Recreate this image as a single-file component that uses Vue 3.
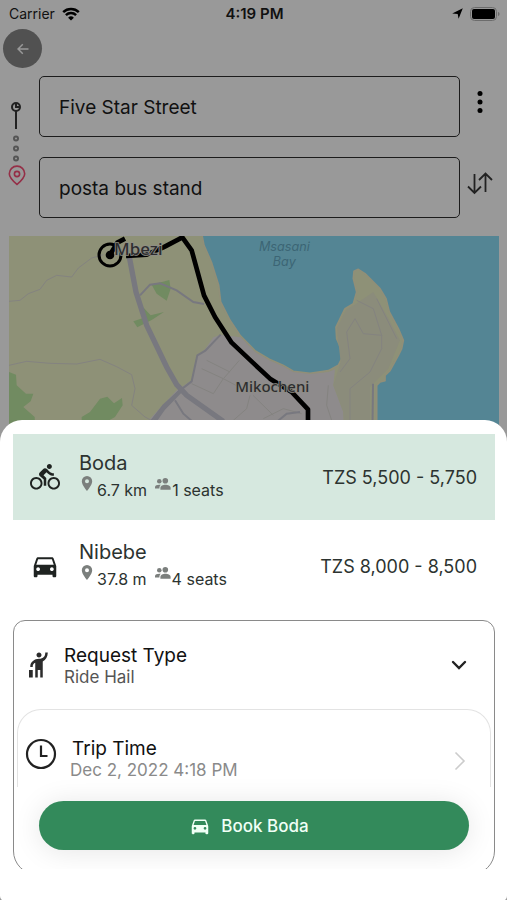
<script setup>
import { ref } from 'vue'

const pickup = ref('Five Star Street')
const destination = ref('posta bus stand')
const selected = ref('Boda')

const rides = [
  { name: 'Boda', icon: 'bike', distance: '6.7 km', seats: 1, price: 'TZS 5,500 - 5,750' },
  { name: 'Nibebe', icon: 'car', distance: '37.8 m', seats: 4, price: 'TZS 8,000 - 8,500' }
]

const icons = {
  bike: 'M15.5 5.5c1.1 0 2-.9 2-2s-.9-2-2-2-2 .9-2 2 .9 2 2 2zM5 12c-2.8 0-5 2.2-5 5s2.2 5 5 5 5-2.2 5-5-2.2-5-5-5zm0 8.5c-1.9 0-3.5-1.6-3.5-3.5s1.6-3.5 3.5-3.5 3.5 1.6 3.5 3.5-1.6 3.5-3.5 3.5zm5.8-10l2.4-2.4.8.8c1.3 1.3 3 2.1 5.1 2.1V9c-1.5 0-2.7-.6-3.6-1.5l-1.9-1.9c-.5-.4-1-.6-1.6-.6s-1.1.2-1.4.6L7.8 8.4c-.4.4-.6.9-.6 1.4 0 .6.2 1.1.6 1.4L11 14v5h2v-6.2l-2.2-2.3zM19 12c-2.8 0-5 2.2-5 5s2.2 5 5 5 5-2.2 5-5-2.2-5-5-5zm0 8.5c-1.9 0-3.5-1.6-3.5-3.5s1.6-3.5 3.5-3.5 3.5 1.6 3.5 3.5-1.6 3.5-3.5 3.5z',
  car: 'M18.92 6.01C18.72 5.42 18.16 5 17.5 5h-11c-.66 0-1.21.42-1.42 1.01L3 12v8c0 .55.45 1 1 1h1c.55 0 1-.45 1-1v-1h12v1c0 .55.45 1 1 1h1c.55 0 1-.45 1-1v-8l-2.08-5.99zM6.5 16c-.83 0-1.5-.67-1.5-1.5S5.67 13 6.5 13s1.5.67 1.5 1.5S7.33 16 6.5 16zm11 0c-.83 0-1.5-.67-1.5-1.5s.67-1.5 1.5-1.5 1.5.67 1.5 1.5-.67 1.5-1.5 1.5zM5 11l1.5-4.5h11L19 11H5z'
}

const swapStops = () => {
  const from = pickup.value
  pickup.value = destination.value
  destination.value = from
}
</script>

<template>
  <div class="screen">
    <header class="status-bar">
      <div class="status-bar__left">
        <span>Carrier</span>
        <svg class="wifi" viewBox="0 0 18 14">
          <path d="M1.2 5.2a11.4 11.4 0 0 1 15.6 0" />
          <path d="M3.9 8.1a7.4 7.4 0 0 1 10.2 0" />
          <path class="solid" d="M9 13.6L6.1 10.7a4.2 4.2 0 0 1 5.8 0z" />
        </svg>
      </div>
      <span class="status-bar__time">4:19 PM</span>
      <div class="status-bar__right">
        <svg class="arrow" viewBox="0 0 11 11">
          <path d="M10.8.2L6.6 10.8 5.7 5.9.2 5.6z" />
        </svg>
        <svg class="battery" viewBox="0 0 30 14">
          <rect class="battery__shell" x="0.5" y="0.5" width="26" height="13" rx="4" />
          <rect x="2" y="2" width="23" height="10" rx="2" />
          <path class="battery__tip" d="M28 5c2 .6 2 3.4 0 4z" />
        </svg>
      </div>
    </header>

    <button class="back" type="button" aria-label="Back">
      <svg viewBox="0 0 12 12"><path d="M11.5 6H1M5.8 1.2L1 6l4.8 4.8" /></svg>
    </button>

    <div class="stops">
      <svg class="stops__trail" viewBox="0 0 20 90">
        <g stroke="#222">
          <circle cx="10" cy="8" r="4" />
          <path d="M10 4v4h3M10 12v18" />
        </g>
        <circle cx="10" cy="39.5" r="2" />
        <circle cx="10" cy="49.5" r="2" />
        <circle cx="10" cy="59.5" r="2" />
        <g stroke="#952f47" stroke-width="1.6">
          <path d="M11 85.5c-3-2.6-7.7-6.5-7.7-10.7a7.7 7.7 0 0 1 15.4 0c0 4.2-4.7 8.1-7.7 10.7z" />
          <circle cx="11" cy="75" r="2.6" />
        </g>
      </svg>
      <input v-model="pickup" class="stops__field" type="text" aria-label="Pickup" />
      <button class="stops__action" type="button" aria-label="More options">
        <svg viewBox="0 0 28 28">
          <circle cx="14" cy="5.5" r="2.5" />
          <circle cx="14" cy="14" r="2.5" />
          <circle cx="14" cy="22.5" r="2.5" />
        </svg>
      </button>
      <input v-model="destination" class="stops__field" type="text" aria-label="Destination" />
      <button class="stops__action" type="button" aria-label="Swap stops" @click="swapStops">
        <svg class="swap" viewBox="0 0 28 28">
          <path d="M8.5 5v19M2 17.5L8.5 24l6.5-6.5M19.5 23V4.5M13 11l6.5-6.5L26 11" />
        </svg>
      </button>
    </div>

    <svg class="map" viewBox="27 32 1470 612" preserveAspectRatio="xMidYMin slice">
      <rect x="27" y="32" width="1470" height="612" fill="#548594" />
      <path class="coast" fill="#8e9177" d="M0 0H600L612 60 634 110 656 180 662 230 690 285 720 330 765 376 808 402 849 420 880 438 930 444 985 436 1015 420 1025 400 1023 370 1010 340 1008 305 1035 250 1060 235 1070 200 1060 160 1062 138 1075 132 1095 145 1140 190 1158 220 1168 260 1195 310 1210 345 1205 370 1195 390 1170 436 1155 450 1155 466 1140 470 1130 480 1130 585 1134 650H0z" />
      <path fill="#8e8b8c" d="M662 328L722 336 765 380 808 405 849 423 880 440 930 446 985 440 1005 432 1000 480 1030 560 1034 650H400L450 580 530 495 575 465 592 390 615 372 640 336z" />
      <path fill="#8b8c7b" d="M1022 410L1014 340 1012 306 1038 254 1064 238 1120 200 1160 270 1200 345 1165 430 1110 485 1110 650H1034L1030 560 1000 480z" />
      <g fill="#718b61">
        <path d="M27 440L48 448 50 480 78 505 100 505 92 528 70 545 104 575 108 644H27z" />
        <path d="M245 575L270 560 300 520 322 514 342 534 366 518 368 540 345 575 300 600H245z" />
        <path d="M455 178L508 164 512 190 500 226 470 205z" />
        <path d="M400 288L430 278 428 244 452 270 492 260 455 284 412 306z" />
      </g>
      <g class="lane">
        <path d="M27 228L60 225 85 205 120 192 140 165 170 150 215 155 235 128 275 98 310 88" />
        <path d="M27 420L80 408 150 414 230 416 300 402 350 424 395 448 405 490 395 540 435 575 460 588" />
        <path d="M1070 225L1120 250 1145 330 1090 325 1065 280 1040 320 1050 400 1020 440M1145 330L1145 370 1110 440 1050 490 1050 600M1130 220L1165 290 1190 340" />
        <path d="M985 480L980 540 1000 600M605 430L670 460 745 500M670 460L640 505 575 475M718 405L672 458M620 405L690 440M750 510L740 550 700 585M790 580L850 550 905 565M759 510L820 570" />
      </g>
      <g class="road">
        <path d="M420 210L450 178 480 174 530 195 580 230 612 236" />
        <path d="M455 585L490 540 540 495 575 468 592 390 616 376 662 328" />
        <path class="road--wide" d="M455 600L490 550 540 498" />
        <path d="M525 525L550 565 590 600M830 590L860 565 900 560M1119 475L1117 640" />
        <path class="road--main" d="M388 95L408 200 440 300 500 425 530 478 560 510 670 588" />
      </g>
      <path class="route" d="M330 88L352 52 375 40M378 92L440 88 490 66 547 36 575 75 612 210 645 275 695 352 765 418 810 460 875 500 924 552V650" />
      <circle class="origin" cx="330" cy="89" r="33" />
      <circle cx="330" cy="89" r="13" />
      <g class="map__labels">
        <text x="415" y="88" font-size="51">Mbezi</text>
        <text x="817" y="501" font-size="45">Mikocheni</text>
      </g>
      <g class="map__water">
        <text x="853" y="76" font-size="38">Msasani</text>
        <text x="853" y="121" font-size="38">Bay</text>
      </g>
    </svg>

    <main class="sheet">
      <div class="rides">
        <button
          v-for="ride in rides"
          :key="ride.name"
          type="button"
          :class="['ride', { 'ride--selected': ride.name === selected }]"
          :aria-pressed="ride.name === selected"
          @click="selected = ride.name"
        >
          <svg class="ride__icon" viewBox="0 0 24 24"><path :d="icons[ride.icon]" /></svg>
          <span class="ride__body">
            <span class="ride__name">{{ ride.name }}</span>
            <span class="ride__meta">
              <svg class="pin" viewBox="0 0 12 16">
                <path d="M6 0a5.2 5.2 0 0 0-5.2 5.2C.8 9.1 6 15 6 15s5.2-5.9 5.2-9.8A5.2 5.2 0 0 0 6 0zm0 7.2a2 2 0 1 1 0-4 2 2 0 0 1 0 4z" />
              </svg>
              <span class="ride__distance">{{ ride.distance }}</span>
              <svg class="people" viewBox="0 0 16 12">
                <circle cx="10.3" cy="2.8" r="2.8" />
                <path d="M5.4 11.8V10C5.4 7.6 8 6.7 10.4 6.7s5.2.9 5.2 3.3v1.8z" />
                <circle cx="4.3" cy="3.2" r="2.3" />
                <path d="M0 10.4V9.2C0 7.2 2.8 6.5 5.8 6.8 4.8 7.7 4.4 8.7 4.4 10.4z" />
              </svg>
              <span>{{ ride.seats }} seats</span>
            </span>
          </span>
          <span class="ride__price">{{ ride.price }}</span>
        </button>
      </div>

      <div class="options-clip">
        <div class="options">
          <button class="option" type="button" aria-expanded="false">
            <svg class="option__hail" viewBox="0 0 24 24">
              <path d="M12 6c-1.1 0-2-.9-2-2s.9-2 2-2 2 .9 2 2-.9 2-2 2zM17 2h2v.4c0 2.8-1.6 5.5-4 6.7V22h-2v-6h-2v6H9V10.1c-.3.1-.5.2-.6.3-.9.6-1.4 1.5-1.4 2.6v.5H5V13c0-1.8.8-3.2 2.2-4.3C8.5 7.6 10.2 7 12 7c3.5 0 5-2.2 5-4.6V2zM4 16h3v6H4z" />
            </svg>
            <span class="option__body">
              <span class="option__title">Request Type</span>
              <span class="option__value">Ride Hail</span>
            </span>
            <svg class="option__down" viewBox="0 0 16 10"><path d="M2 2l6 6 6-6" /></svg>
          </button>

          <button class="option option--time" type="button">
            <svg class="option__clock" viewBox="0 0 32 32">
              <circle cx="16" cy="16" r="14" />
              <path d="M16 7.5V18h6.5" />
            </svg>
            <span class="option__body">
              <span class="option__title">Trip Time</span>
              <span class="option__value">Dec 2, 2022 4:18 PM</span>
            </span>
            <svg class="option__next" viewBox="0 0 12 20"><path d="M1.5 1.5L10 10l-8.5 8.5" /></svg>
          </button>

          <button class="book" type="button">
            <svg viewBox="0 0 24 24"><path :d="icons.car" /></svg>
            <span>Book {{ selected }}</span>
          </button>
        </div>
      </div>
    </main>
  </div>
</template>

<style>
body {
  margin: 0;
  background: #999;
}
</style>

<style scoped>
.screen {
  display: flex;
  flex-direction: column;
  min-height: 100vh;
  background: #999;
  color: #111;
  font-family: Inter, 'Liberation Sans', sans-serif;
}

button,
input {
  box-sizing: border-box;
  margin: 0;
  padding: 0;
  border: 0;
  background: none;
  color: inherit;
  font: inherit;
  text-align: left;
}

button {
  cursor: pointer;
}

svg {
  display: block;
  flex: none;
}

/* Status bar */
.status-bar {
  display: grid;
  grid-template-columns: 1fr auto 1fr;
  align-items: center;
  height: 27px;
  padding: 0 7px 0 9px;
  font-size: 14px;
}

.status-bar__left,
.status-bar__right {
  display: flex;
  align-items: center;
  gap: 7px;
}

.status-bar__right {
  justify-content: flex-end;
}

.status-bar__time {
  font-size: 15px;
  font-weight: 600;
}

.wifi {
  width: 18px;
  height: 14px;
  fill: none;
  stroke: #000;
  stroke-width: 2.5;
}

.wifi .solid {
  fill: #000;
  stroke: none;
}

.arrow {
  width: 11px;
  height: 11px;
}

.battery {
  width: 30px;
  height: 14px;
}

.battery__shell {
  fill: none;
  stroke: #6c6c6c;
}

.battery__tip {
  fill: #6c6c6c;
}

.back {
  display: flex;
  align-items: center;
  justify-content: center;
  width: 39px;
  height: 39px;
  margin: 2px 0 8px 3px;
  border-radius: 50%;
  background: #515151;
}

.back svg {
  width: 12px;
  height: 12px;
  fill: none;
  stroke: #999;
  stroke-width: 1.5;
}

/* Pickup and destination */
.stops {
  display: grid;
  grid-template-columns: 39px 1fr 40px;
  gap: 20px 0;
  padding-right: 7px;
}

.stops__trail {
  grid-row: 1 / 3;
  width: 20px;
  height: 90px;
  margin: 23px 0 0 6px;
  fill: none;
  stroke: #555;
  stroke-width: 2;
}

.stops__field {
  width: 100%;
  height: 61px;
  padding: 2px 19px 0;
  border: 1px solid #1c1c1c;
  border-radius: 5px;
  font-size: 19px;
}

.stops__action {
  display: flex;
  align-items: center;
  justify-content: center;
}

.stops__action svg {
  width: 28px;
  height: 28px;
  margin-bottom: 9px;
}

.stops__action .swap {
  fill: none;
  stroke: #222;
  stroke-width: 1.8;
}

/* Map */
.map {
  width: calc(100% - 17px);
  height: 204px;
  margin: 18px 8px 0 9px;
}

.coast {
  stroke: #918f78;
  stroke-width: 5;
  stroke-linejoin: round;
}

.lane {
  fill: none;
  stroke: #848380;
  stroke-width: 3;
}

.road {
  fill: none;
  stroke: #78787f;
  stroke-width: 6;
}

.road--wide {
  stroke-width: 12;
}

.road--main {
  stroke-width: 16;
}

.route {
  fill: none;
  stroke: #000;
  stroke-width: 14;
  stroke-linejoin: round;
}

.origin {
  fill: none;
  stroke: #000;
  stroke-width: 9;
}

.map__labels text,
.map__water text {
  text-anchor: middle;
}

.map__labels text {
  fill: #2d2d2f;
  stroke: #8e8d86;
  stroke-width: 5;
  paint-order: stroke;
  font-family: 'Noto Sans', sans-serif;
  font-weight: 500;
}

.map__water text {
  fill: #3c6575;
  font-style: italic;
}

/* Bottom sheet */
.sheet {
  position: relative;
  flex: 1;
  margin-top: -20px;
  padding: 14px 12px 32px 13px;
  border-radius: 22px 22px 5px 5px;
  background: #fff;
}

.rides {
  display: grid;
  gap: 3px;
}

.ride {
  display: flex;
  align-items: center;
  width: 100%;
  height: 86px;
  padding: 0 18px 0 17px;
  color: #2c3330;
}

.ride--selected {
  background: #d6e8df;
}

.ride__icon {
  width: 30px;
  height: 30px;
  margin-right: 19px;
  fill: #1f2321;
}

.ride__body {
  display: flex;
  flex: 1;
  flex-direction: column;
}

.ride__name {
  font-size: 20px;
  line-height: 26px;
}

.ride__meta {
  display: flex;
  align-items: flex-start;
  font-size: 16px;
  line-height: 28px;
}

.pin {
  width: 12px;
  height: 16px;
  margin-right: 4px;
  margin-left: 2px;
  fill: #7b7f7d;
}

.ride__distance {
  margin-right: 8px;
}

.people {
  width: 16px;
  height: 12px;
  margin: 2px 1px 0 0;
  fill: #7b7f7d;
}

.ride__price {
  font-size: 18px;
}

/* Request options */
.options-clip {
  overflow: hidden;
  margin-top: 11px;
}

.options {
  margin-bottom: -6px;
  padding: 0 3px 24px;
  border: 1px solid #8a8a8a;
  border-radius: 12px 12px 24px 24px;
}

.option {
  display: flex;
  align-items: center;
  width: 100%;
  height: 88px;
  padding: 0 24px 0 7px;
}

.option__hail {
  width: 30px;
  height: 30px;
  margin-right: 10px;
  fill: #2b2b2b;
}

.option__body {
  display: flex;
  flex: 1;
  flex-direction: column;
}

.option__title {
  font-size: 19px;
  line-height: 24px;
}

.option__value {
  color: #555;
  font-size: 17px;
  line-height: 18px;
}

.option__down {
  width: 16px;
  height: 10px;
  fill: none;
  stroke: #222;
  stroke-width: 2.4;
  stroke-linecap: round;
}

.option--time {
  align-items: flex-end;
  height: 78px;
  padding: 0 24px 8px 7px;
  border: 1px solid #e3e3e3;
  border-bottom: 0;
  border-radius: 24px 24px 0 0;
}

.option--time .option__title {
  padding-left: 2px;
}

.option--time .option__value {
  color: #8a8a8a;
}

.option__clock {
  width: 32px;
  height: 32px;
  margin: 0 13px 9px 0;
  fill: none;
  stroke: #222;
  stroke-width: 2.2;
}

.option__next {
  width: 12px;
  height: 20px;
  margin-bottom: 8px;
  fill: none;
  stroke: #ccc;
  stroke-width: 1.6;
}

.book {
  display: flex;
  align-items: center;
  justify-content: center;
  gap: 10px;
  width: calc(100% - 44px);
  height: 49px;
  margin: 14px 22px 0;
  padding-right: 10px;
  border-radius: 25px;
  background: #338a5b;
  box-shadow: 0 2px 28px rgba(0, 0, 0, 0.1);
  color: #f0fff6;
  font-size: 17px;
  font-weight: 500;
}

.book svg {
  width: 22px;
  height: 22px;
  fill: currentColor;
}
</style>
